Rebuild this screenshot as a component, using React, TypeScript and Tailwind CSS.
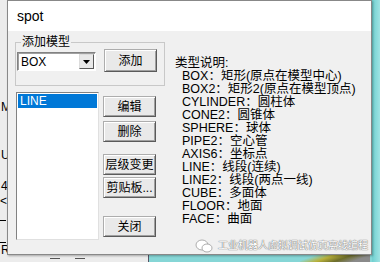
import React from "react"

const font = { fontFamily: '"Liberation Sans", "Noto Sans CJK SC", sans-serif' }

function Btn({ label, className = "" }: { label: string; className?: string }) {
  return (
    <div
      className={
        "flex items-center justify-center w-[53px] h-[21px] bg-[#e9e9e9] text-[12px] leading-[14px] text-black border border-[#adadad] border-r-[#5a5a5a] border-b-[#5a5a5a] shadow-[inset_1px_1px_#fff,inset_-1px_-1px_#a0a0a0] " +
        className
      }
    >
      {label}
    </div>
  )
}

const types = [
  "BOX：矩形(原点在模型中心)",
  "BOX2：矩形2(原点在模型顶点)",
  "CYLINDER：圆柱体",
  "CONE2：圆锥体",
  "SPHERE：球体",
  "PIPE2：空心管",
  "AXIS6：坐标点",
  "LINE：线段(连续)",
  "LINE2：线段(两点一线)",
  "CUBE：多面体",
  "FLOOR：地面",
  "FACE：曲面",
]

export default function App() {
  return (
    <div className="relative w-[380px] h-[262px] overflow-hidden bg-[#ececec]" style={font}>
      {/* app behind the dialog */}
      <div className="absolute left-0 top-0 w-[8px] h-full text-[12px] text-black leading-[12px]">
        <span className="absolute left-[1px] top-[101px]">M</span>
        <span className="absolute left-[1px] top-[149px]">U</span>
        <span className="absolute left-[1px] top-[180px]">4,</span>
        <span className="absolute left-[0px] top-[195px]">&lt;5</span>
        <div className="absolute left-0 top-[220px] w-[6px] h-px bg-black" />
        <div className="absolute left-0 top-[242px] w-[6px] h-px bg-black" />
        <span className="absolute left-[1px] top-[244px]">R</span>
      </div>
      <div className="absolute left-[148px] top-[254px] w-[232px] h-[8px] bg-[#86d6d6] border-l border-[#556]" />
      <div className="absolute left-[300px] top-[254px] w-[70px] h-[8px] bg-[linear-gradient(160deg,#86d6d6_20%,#b9b13a_40%,#6d6d2a_60%,#8a8a8a_80%)]" />
      <div className="absolute left-[372px] top-0 w-[8px] h-[262px] bg-[linear-gradient(90deg,#6fd0d0,#9fe3e3)]" />
      <div className="absolute left-[50px] top-[258px] w-[10px] h-px bg-[#555]" />
      <div className="absolute left-[75px] top-[258px] w-[10px] h-px bg-[#555]" />

      {/* dialog window */}
      <div className="absolute left-[7px] top-0 w-[365px] h-[255px] flex flex-col border border-[#888] bg-[#f0f0f0] shadow-[1px_1px_2px_rgba(0,0,0,0.3)]">
        <div className="h-[30px] bg-white flex items-center pl-[9px] text-[14px] text-black">spot</div>

        <div className="flex-1 flex pl-[7px]">
          {/* left part */}
          <div className="flex flex-col w-[152px]">
            <div className="relative mt-[11px] w-[150px] h-[44px] border border-[#c8c8c8]">
              <span className="absolute left-[5px] top-[-8px] px-[1px] bg-[#f0f0f0] text-[12px] leading-[14px] text-black">
                添加模型
              </span>
              <div className="flex items-start pl-[1px] pt-[9px]">
                <div className="flex items-center w-[79px] h-[19px] bg-white border border-[#828282] border-r-white border-b-white shadow-[inset_1px_1px_#a0a0a0]">
                  <span className="flex-1 pl-[3px] text-[12px] text-black">BOX</span>
                  <div className="flex items-center justify-center w-[15px] h-[15px] mr-[1px] bg-[#e9e9e9] border border-[#dcdcdc] border-r-[#5a5a5a] border-b-[#5a5a5a]">
                    <svg width="7" height="4" viewBox="0 0 7 4">
                      <path d="M0 0h7L3.5 4z" fill="#000" />
                    </svg>
                  </div>
                </div>
                <Btn label="添加" className="ml-[8px] -mt-[3px] h-[23px]" />
              </div>
            </div>

            <div className="flex mt-[6px]">
              <div className="w-[83px] h-[148px] ml-[1px] bg-white border border-[#828282] border-r-[#e0e0e0] border-b-[#e0e0e0] p-[1px]">
                <div className="h-[14px] bg-[#0078d7] text-white text-[12px] leading-[14px] pl-[2px]">LINE</div>
              </div>
              <div className="flex flex-col ml-[4px] mt-[4px]">
                <Btn label="编辑" className="h-[20px]" />
                <Btn label="删除" className="mt-[4px] h-[20px]" />
                <Btn label="层级变更" className="mt-[12px] h-[19px]" />
                <Btn label="剪贴板..." className="mt-[2px]" />
                <Btn label="关闭" className="mt-[18px]" />
              </div>
            </div>
          </div>

          {/* right text */}
          <div className="flex flex-col pl-[8px] pt-[26px] text-[12.5px] leading-[13px] text-black">
            <div>类型说明:</div>
            {types.map((t) => (
              <div key={t} className="pl-[7px] whitespace-nowrap">{t}</div>
            ))}
          </div>
        </div>

        {/* watermark */}
        <div className="absolute left-[187px] top-[238px] flex items-center gap-[5px] text-[10px] leading-[12px] text-white [text-shadow:0_0_1px_#666,0_0_1px_#666]">
          <svg width="18" height="14" viewBox="0 0 18 14">
            <ellipse cx="7" cy="6" rx="6" ry="5" fill="#fff" stroke="#999" strokeWidth="0.8" />
            <ellipse cx="12" cy="9" rx="5" ry="4" fill="#fff" stroke="#999" strokeWidth="0.8" />
          </svg>
          <span className="whitespace-nowrap">工业机器人虚拟调试仿真离线编程</span>
        </div>
      </div>
    </div>
  )
}
